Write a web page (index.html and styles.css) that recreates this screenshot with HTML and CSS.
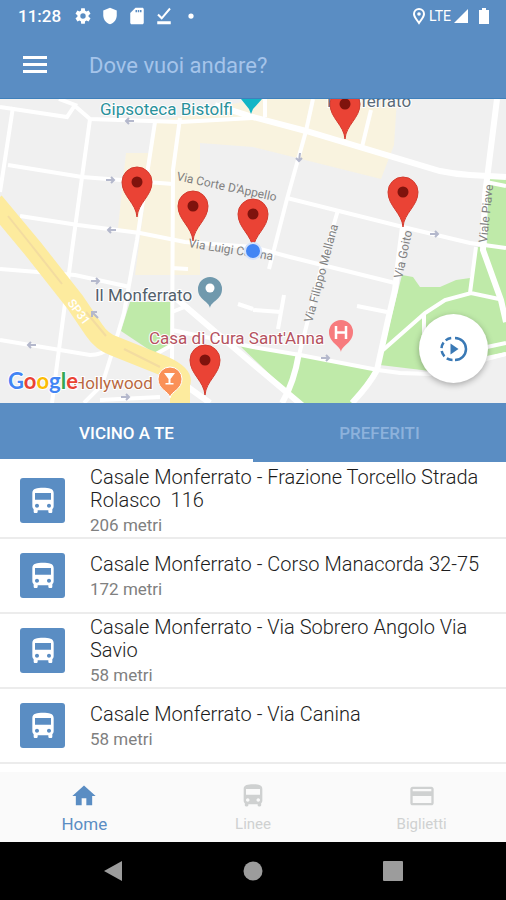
FILE: index.html
```html
<!DOCTYPE html>
<html lang="it">
<head>
  <meta charset="UTF-8">
  <meta name="viewport" content="width=device-width, initial-scale=1.0">
  <title>Fermate vicine</title>
  <link rel="stylesheet" href="styles.css">
</head>
<body>
  <!-- shared icons -->
  <svg class="defs" width="0" height="0" aria-hidden="true">
    <symbol id="bus" viewBox="0 0 24 24">
      <path d="M4 16c0 .88.39 1.67 1 2.22V20c0 .55.45 1 1 1h1c.55 0 1-.45 1-1v-1h8v1c0 .55.45 1 1 1h1c.55 0 1-.45 1-1v-1.780c.61-.55 1-1.340 1-2.220V6c0-3.500-3.580-4-8-4s-8 .5-8 4v10zm3.500 1c-.83 0-1.500-.67-1.500-1.500S6.670 14 7.500 14s1.500.67 1.500 1.500S8.330 17 7.500 17zm9 0c-.83 0-1.500-.67-1.500-1.500s.67-1.500 1.500-1.500 1.500.67 1.500 1.500-.67 1.500-1.500 1.500zm1.500-6H6V6h12v5z"/>
    </symbol>
    <symbol id="pin" viewBox="-16 -51 32 52" overflow="visible">
      <path fill="#ea4335" stroke="#d33b2e" stroke-width="1" d="M0 0C-1-14-15-21-15-35a15 15 0 0 1 30 0C15-21 1-14 0 0z"/>
      <circle cy="-35" r="5.500" fill="#7f130d"/>
    </symbol>
  </svg>

  <header>
    <div class="status">
      <span class="time">11:28</span>
      <svg width="18" height="18" viewBox="0 0 24 24"><path d="M19.400 13c0-.3.100-.6.100-1s0-.7-.1-1l2.600-2-2.500-4.300-3 1.200c-.5-.4-1.100-.7-1.700-1L14.400 1.700H9.600L9.200 4.900c-.6.300-1.200.6-1.700 1l-3-1.200L2 9l2.600 2c0 .3-.1.700-.1 1s0 .7.100 1L2 15l2.500 4.300 3-1.200c.5.400 1.100.7 1.700 1l.4 3.200h4.800l.4-3.200c.6-.3 1.200-.6 1.700-1l3 1.200L22 15zM12 15.600a3.600 3.600 0 1 1 0-7.200 3.600 3.600 0 0 1 0 7.200z"/></svg>
      <svg width="18" height="18" viewBox="0 0 24 24"><path d="M12 1L3 4.500V11c0 5.500 3.800 10.700 9 12 5.200-1.300 9-6.500 9-12V4.500z"/></svg>
      <svg width="18" height="18" viewBox="0 0 24 24"><path fill-rule="evenodd" d="M19 1H10L3 8v13c0 1.100.9 2 2 2h14c1.100 0 2-.9 2-2V3c0-1.100-.9-2-2-2zM12 7h-2V4h2zm3 0h-2V4h2zm3 0h-2V4h2z"/></svg>
      <svg width="18" height="18" viewBox="0 0 24 24"><path d="M3 19h18v4H3zM9 17L3 11l2-2 4 4L19 1l2 2z"/></svg>
      <svg width="18" height="18" viewBox="0 0 24 24"><circle cx="12" cy="12" r="3.500"/></svg>
      <span class="network">
        <svg width="16" height="18" viewBox="0 0 16 18"><path class="outline" d="M8 16C6 13 3 10 3 7a5 5 0 0 1 10 0c0 3-3 6-5 9z"/><circle cx="8" cy="7" r="1.800"/></svg>
        <span class="lte">LTE</span>
        <svg width="16" height="18" viewBox="0 0 16 18"><path d="M15 2v14H1z"/></svg>
      </span>
      <svg class="battery" width="12" height="18" viewBox="0 0 12 18"><path d="M4 1h4v2h3v14H1V3h3z"/></svg>
    </div>
    <div class="search">
      <button class="menu" aria-label="Menu">
        <svg width="24" height="18" viewBox="0 0 24 18"><path d="M0 0h24v3H0zM0 7h24v3H0zM0 14h24v3H0z"/></svg>
      </button>
      <input type="text" aria-label="Destinazione" placeholder="Dove vuoi andare?">
    </div>
  </header>

  <div class="map">
    <svg viewBox="0 99 506 304" role="img" aria-label="Mappa delle fermate">
      <rect y="99" width="506" height="304" fill="#f0f0f0"/>

      <!-- built-up areas -->
      <g fill="#f9f3df">
        <path d="M155 122l100-23h142l-3 46-13 34-128-32-53-4v56l0 76h-65l20-150z"/>
        <path d="M126 153h26l-12 80-22-5z"/>
      </g>
      <!-- parks -->
      <g fill="#bfeaa9">
        <path d="M130 302h42v43l-18 8-33-22z"/>
        <path d="M238 344l15 2 121 24-21 33h-53z"/>
        <path d="M402 275l11 2 7 10h20l16-7 14-2 7-31h10l1-69h18v176l-46 16-30 1-50-6 12-50z"/>
      </g>

      <!-- streets -->
      <g class="road">
        <path d="M0 107l67 10 8-12-16-6M75 106l15 13 90 3 73-4"/>
        <path d="M13 107L0 192M90 119L72 250 52 403"/>
        <path d="M155 122l-18 118-13 73-12 40-10 32-18 18"/>
        <path d="M180 118l-7 52-1 195M172 268l16 1"/>
        <path d="M8 165l74 12 91 7M20 216l58 9 62 8 45 9 68 5 37 10 105 26"/>
        <path d="M0 269l75 6 55 12M0 340l90 15q12 0 22-8"/>
        <path d="M265 99v18M371 110l-9 37M313 99l-7 32-19 68-18 70"/>
        <path d="M287 198l48 12 68 17 67 16 36 5M338 210l-16 55-23 90"/>
        <path d="M253 310l28 2M284 295l-6 34M238 304l15 5M357 306l30 6"/>
        <path d="M383 350l42-37 20-13 26-7 28 6M476 247l-6 46M424 314v20M487 347l19-4M487 358l19-4"/>
        <path d="M172 330l81 17 47 8 78 15 22 3 30 1 76-20M172 312l15-6M172 345l-16 9M100 400l60-3"/>
        <path d="M486 182l20 4"/>
      </g>
      <g class="road wide">
        <path d="M215 105l38 12 53 14 134 40q14 3 30 4l36 2"/>
        <path d="M497 99l-12 96-2 55 18 50 5 22"/>
        <path d="M403 227l-8 63-7 30-11 50q-8 15-25 33M299 353q-5 30-17 50"/>
        <path d="M178 300l75 64 50 42M185 385l25 18"/>
      </g>

      <!-- SP31 -->
      <path class="highway" d="M-6 202l40 48 41 52 19 28q8 12 20 16l50 20q20 9 16 18v24"/>
      <path class="lane" d="M8 216l24 30 30 38M86 312l20 24M124 349l36 18"/>

      <!-- one way arrows -->
      <g class="arrow">
        <path d="M134 121h-8m3-3l-3 3 3 3"/>
        <path d="M106 180h8m-3-3l3 3-3 3"/>
        <path d="M116 230h-8m3-3l-3 3 3 3"/>
        <path d="M91 281h8m-3-3l3 3-3 3"/>
        <path d="M36 345h-8m3-3l-3 3 3 3"/>
        <path d="M121 397h8m-3-3l3 3-3 3"/>
        <path d="M98 318l-6-6m0 5v-5h5"/>
        <path d="M300 153l-1 8m-3-3l3 3 3-3"/>
        <path d="M430 234h8m-3-3l3 3-3 3"/>
        <path d="M321 358h8m-3-3l3 3-3 3"/>
      </g>

      <!-- street names -->
      <g class="street">
        <text transform="translate(176 180) rotate(12)">Via Corte D'Appello</text>
        <text transform="translate(188 247) rotate(9)">Via Luigi Canina</text>
        <text transform="translate(312 323) rotate(-75)">Via Filippo Mellana</text>
        <text transform="translate(402 279) rotate(-78)">Via Goito</text>
        <text transform="translate(487 243) rotate(-84)">Viale Piave</text>
      </g>
      <text class="sp" transform="translate(67 303) rotate(53)">SP31</text>

      <!-- places -->
      <g class="place">
        <text x="100" y="115" fill="#2a919b">Gipsoteca Bistolfi</text>
        <text x="327" y="107" fill="#5b6b78">Monferrato</text>
        <text x="95" y="301" fill="#53606b">Il Monferrato</text>
        <text x="149" y="344" fill="#b5525f">Casa di Cura Sant'Anna</text>
        <text x="73" y="389" fill="#b9683f">Hollywood</text>
      </g>
      <path fill="#12b5c6" d="M241 99h21l-9 10-2 5-2-5z"/>
      <path fill="#7099ad" d="M210 308c-1-7-12-8-12-19a12 12 0 0 1 24 0c0 11-11 12-12 19z"/>
      <circle cx="210" cy="288" r="4.500" fill="#fff"/>
      <path fill="#f77b7e" d="M341 352c-1-7-12-9-12-20a12 12 0 0 1 24 0c0 11-11 13-12 20z"/>
      <path stroke="#fff" stroke-width="2.500" fill="none" d="M336 326v13M346 326v13M336 332.500h10"/>
      <path fill="#fa9158" stroke="#fff" stroke-width="1" d="M170 398c-1-7-12-8-12-19a12 12 0 0 1 24 0c0 11-11 12-12 19z"/>
      <path fill="#fff" d="M164 373h11l-4.500 6v4h3v1.500h-8V383h3v-4z"/>

      <!-- stops -->
      <use href="#pin" x="329" y="88" width="32" height="52"/>
      <use href="#pin" x="121" y="166" width="32" height="52"/>
      <use href="#pin" x="177" y="190" width="32" height="52"/>
      <use href="#pin" x="237" y="198" width="32" height="52"/>
      <use href="#pin" x="387" y="176" width="32" height="52"/>
      <use href="#pin" x="189" y="344" width="32" height="52"/>
      <circle cx="253" cy="251" r="8" fill="#4285f4" stroke="#d5e3fb" stroke-width="2"/>

      <text class="google" x="8" y="389"><tspan fill="#4285f4">G</tspan><tspan fill="#ea4335">o</tspan><tspan fill="#fbbc05">o</tspan><tspan fill="#4285f4">g</tspan><tspan fill="#34a853">l</tspan><tspan fill="#ea4335">e</tspan></text>
    </svg>
    <button class="start" aria-label="Avvia">
      <svg width="28" height="28" viewBox="0 0 28 28">
        <path fill="#3a79b5" d="M10.500 8.500v11l8-5.500z"/>
        <path fill="none" stroke="#3a79b5" stroke-width="2.500" d="M15 3a11 11 0 0 1 0 22"/>
        <path fill="none" stroke="#3a79b5" stroke-width="2.500" stroke-dasharray="6 3" d="M12.500 25a11 11 0 0 1 0-22"/>
      </svg>
    </button>
  </div>

  <div class="tabs">
    <button class="active">VICINO A TE</button>
    <button>PREFERITI</button>
  </div>

  <ul class="stops">
    <li>
      <span class="badge"><svg width="32" height="32"><use href="#bus"/></svg></span>
      <div>
        <h2>Casale Monferrato - Frazione Torcello Strada Rolasco &nbsp;116</h2>
        <p>206 metri</p>
      </div>
    </li>
    <li>
      <span class="badge"><svg width="32" height="32"><use href="#bus"/></svg></span>
      <div>
        <h2>Casale Monferrato - Corso Manacorda 32-75</h2>
        <p>172 metri</p>
      </div>
    </li>
    <li>
      <span class="badge"><svg width="32" height="32"><use href="#bus"/></svg></span>
      <div>
        <h2>Casale Monferrato - Via Sobrero Angolo Via Savio</h2>
        <p>58 metri</p>
      </div>
    </li>
    <li>
      <span class="badge"><svg width="32" height="32"><use href="#bus"/></svg></span>
      <div>
        <h2>Casale Monferrato - Via Canina</h2>
        <p>58 metri</p>
      </div>
    </li>
  </ul>

  <nav class="bottom">
    <a href="#" class="current">
      <svg width="28" height="28" viewBox="0 0 24 24"><path d="M10 20v-6h4v6h5v-8h3L12 3 2 12h3v8z"/></svg>
      Home
    </a>
    <a href="#">
      <svg width="28" height="28"><use href="#bus"/></svg>
      Linee
    </a>
    <a href="#">
      <svg width="28" height="28" viewBox="0 0 24 24"><path d="M20 4H4c-1.110 0-2 .89-2 2v12c0 1.110.89 2 2 2h16c1.110 0 2-.89 2-2V6c0-1.110-.89-2-2-2zm0 14H4v-6h16v6zm0-10H4V6h16v2z"/></svg>
      Biglietti
    </a>
  </nav>

  <div class="system">
    <button aria-label="Indietro"><svg width="20" height="20" viewBox="0 0 20 20"><path d="M19 0v20L1 10z"/></svg></button>
    <button aria-label="Home"><svg width="20" height="20" viewBox="0 0 20 20"><circle cx="10" cy="10" r="9.500"/></svg></button>
    <button aria-label="Recenti"><svg width="20" height="20" viewBox="0 0 20 20"><rect width="20" height="20" rx="1"/></svg></button>
  </div>
</body>
</html>
```
FILE: styles.css
```css
* {
  box-sizing: border-box;
}

body {
  display: flex;
  flex-direction: column;
  min-height: 100vh;
  margin: 0;
  font-family: Roboto, "Liberation Sans", sans-serif;
  background-color: #ffffff;
}

button {
  padding: 0;
  border: none;
  background: none;
  font-family: inherit;
  cursor: pointer;
}

svg {
  display: block;
}

.defs {
  position: absolute;
}

header {
  background-color: #5a8dc3;
  color: #ffffff;
  border-bottom: 1px solid #3f80bb;
}

header svg {
  fill: #ffffff;
}

/* status bar */
.status {
  display: flex;
  align-items: center;
  gap: 9px;
  height: 32px;
  padding: 0 16px 0 18px;
}

.time {
  margin-right: 4px;
  font-size: 17px;
  font-weight: 500;
}

.network {
  display: flex;
  align-items: center;
  gap: 2px;
  margin-left: auto;
}

.lte {
  font-size: 14px;
}

.status .outline {
  fill: none;
  stroke: #ffffff;
  stroke-width: 2;
}

/* search */
.search {
  display: flex;
  align-items: center;
  height: 66px;
  padding: 0 23px;
}

.menu {
  margin-right: 42px;
}

.search input {
  flex: 1;
  min-width: 0;
  padding: 0;
  border: none;
  outline: none;
  background: none;
  color: #ffffff;
  font-family: inherit;
  font-size: 22px;
}

.search input::placeholder {
  color: #a5c4ea;
}

/* map */
.map {
  position: relative;
}

.map > svg {
  width: 100%;
  height: auto;
}

.road {
  fill: none;
  stroke: #ffffff;
  stroke-width: 4;
}

.road.wide {
  stroke-width: 6;
}

.highway {
  fill: none;
  stroke: #fdeb9e;
  stroke-width: 20;
  stroke-linejoin: round;
}

.lane {
  fill: none;
  stroke: #f3dca0;
  stroke-width: 2;
}

.arrow {
  fill: none;
  stroke: #b4b8cc;
  stroke-width: 2;
}

.street {
  fill: #808080;
  font-size: 12px;
}

.sp {
  fill: #ffffff;
  font-size: 12px;
  font-weight: 500;
}

.place {
  font-size: 17px;
  paint-order: stroke;
  stroke: #ffffff;
  stroke-width: 2;
}

.google {
  font-family: Lato, sans-serif;
  font-size: 22px;
  font-weight: 700;
  paint-order: stroke;
  stroke: #ffffff;
  stroke-width: 2;
}

.start {
  position: absolute;
  right: 18px;
  bottom: 20px;
  display: flex;
  align-items: center;
  justify-content: center;
  width: 69px;
  height: 69px;
  border-radius: 50%;
  background-color: #ffffff;
  box-shadow: 0 2px 6px rgba(0, 0, 0, 0.3);
}

/* tabs */
.tabs {
  display: flex;
  background-color: #5a8dc3;
}

.tabs button {
  flex: 1;
  height: 59px;
  padding-top: 4px;
  border-bottom: 3px solid transparent;
  color: #8db2dc;
  font-size: 17px;
  font-weight: 500;
}

.tabs .active {
  border-bottom-color: #ffffff;
  color: #ffffff;
}

/* stops list */
.stops {
  flex: 1;
  margin: 0;
  padding: 2px 0 0;
  list-style: none;
}

.stops li {
  display: flex;
  align-items: center;
  min-height: 75px;
  padding: 0 20px;
  border-bottom: 2px solid #ececec;
}

.badge {
  flex: none;
  display: flex;
  align-items: center;
  justify-content: center;
  width: 45px;
  height: 45px;
  margin-right: 25px;
  border-radius: 3px;
  background-color: #5a8dc3;
  fill: #ffffff;
}

.stops h2 {
  margin: 0;
  color: #1c1c1c;
  font-size: 20px;
  font-weight: 300;
  line-height: 23px;
}

.stops p {
  margin: 3px 0 0;
  color: #808080;
  font-size: 17px;
  line-height: 20px;
}

/* bottom navigation */
.bottom {
  display: flex;
  height: 70px;
  background-color: #fafafa;
}

.bottom a {
  flex: 1;
  display: flex;
  flex-direction: column;
  align-items: center;
  padding-top: 10px;
  color: #cfd1d1;
  fill: #cfd1d1;
  font-size: 15px;
  line-height: 28px;
  text-decoration: none;
}

.bottom .current {
  color: #5a8dc3;
  fill: #5a8dc3;
  font-size: 17px;
}

/* android buttons */
.system {
  display: flex;
  justify-content: center;
  gap: 120px;
  height: 58px;
  background-color: #000000;
  fill: #9c9c9c;
}
```
